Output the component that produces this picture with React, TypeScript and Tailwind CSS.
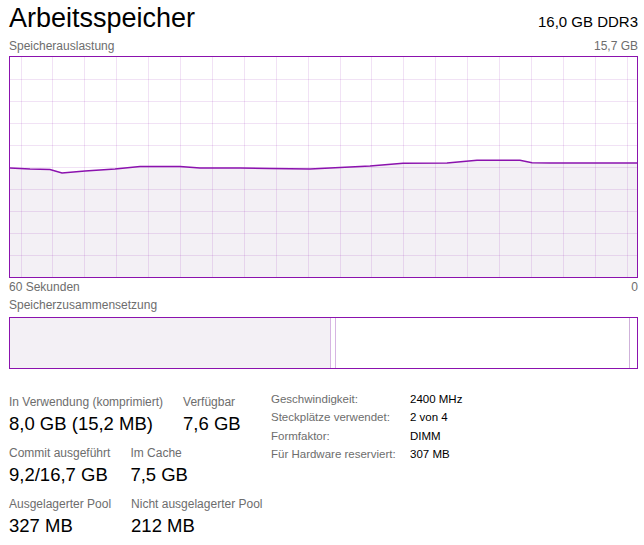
const points: [number, number][] = [
  [0, 111],
  [20, 112],
  [40, 112.5],
  [52, 116],
  [75, 114],
  [105, 112],
  [130, 109.5],
  [170, 109.5],
  [190, 111],
  [230, 111],
  [260, 111.5],
  [300, 112],
  [330, 110.5],
  [360, 109],
  [393, 106.3],
  [437, 106],
  [467, 103.3],
  [510, 103.3],
  [522, 105.7],
  [540, 106],
  [627, 106],
];

const W = 627;
const H = 220;

function UsageChart() {
  const line = points.map(([x, y]) => `${x},${y}`).join(" ");
  const area = `0,${H} ${line} ${W},${H}`;
  const vLines = Array.from({ length: 20 }, (_, k) => 10.5 + k * 31.9);
  const hLines = Array.from({ length: 9 }, (_, k) => 22.5 + k * 22);
  return (
    <div className="h-[222px] w-[629px] border border-[#8b12ae]">
      <svg width={W} height={H} className="block">
        <polygon points={area} fill="#f3f0f5" />
        {vLines.map((x) => (
          <line key={x} x1={Math.round(x) + 0.5} x2={Math.round(x) + 0.5} y1={0} y2={H} stroke="rgba(139,18,174,0.12)" strokeWidth={1} />
        ))}
        {hLines.map((y) => (
          <line key={y} x1={0} x2={W} y1={y} y2={y} stroke="rgba(139,18,174,0.12)" strokeWidth={1} />
        ))}
        <polyline points={line} fill="none" stroke="#8b12ae" strokeWidth={1.4} />
      </svg>
    </div>
  );
}

function CompositionBar() {
  return (
    <div className="flex h-[52px] w-[629px] border border-[#8b12ae]">
      <div className="w-[320px] bg-[#f3f0f5]" />
      <div className="w-[6px] border-x border-[#d6b5e2]" />
      <div className="w-[293px]" />
      <div className="w-[8px] border-l border-[#cfb2da]" />
    </div>
  );
}

function Stat({ label, value }: { label: string; value: string }) {
  return (
    <div>
      <div className="text-[12px] leading-[18px] text-[#6d6d6d]">{label}</div>
      <div className="text-[18.5px] leading-[26px] text-black">{value}</div>
    </div>
  );
}

const hardware = [
  ["Geschwindigkeit:", "2400 MHz"],
  ["Steckplätze verwendet:", "2 von 4"],
  ["Formfaktor:", "DIMM"],
  ["Für Hardware reserviert:", "307 MB"],
];

export default function App() {
  return (
    <div className="h-[545px] w-[644px] overflow-hidden bg-white pl-[9px] font-['Liberation_Sans',Arial,sans-serif]">
      <div className="flex w-[629px] items-baseline justify-between">
        <h1 className="text-[27px] leading-[37px] text-black">Arbeitsspeicher</h1>
        <span className="text-[15px] text-black">16,0 GB DDR3</span>
      </div>

      <div className="flex w-[629px] justify-between text-[12px] leading-[18px] text-[#6d6d6d]">
        <span>Speicherauslastung</span>
        <span>15,7 GB</span>
      </div>
      <div className="mt-[1px]">
        <UsageChart />
      </div>
      <div className="flex w-[629px] justify-between text-[12px] leading-[18px] text-[#6d6d6d]">
        <span>60 Sekunden</span>
        <span>0</span>
      </div>

      <div className="text-[12px] leading-[18px] text-[#6d6d6d]">Speicherzusammensetzung</div>
      <div className="mt-[3px]">
        <CompositionBar />
      </div>

      <div className="mt-[21px] flex items-start">
        <div className="flex w-[262px] flex-col gap-[7px] pt-[3px]">
          <div className="flex gap-5">
            <Stat label="In Verwendung (komprimiert)" value="8,0 GB (15,2 MB)" />
            <Stat label="Verfügbar" value="7,6 GB" />
          </div>
          <div className="flex gap-5">
            <Stat label="Commit ausgeführt" value="9,2/16,7 GB" />
            <Stat label="Im Cache" value="7,5 GB" />
          </div>
          <div className="flex gap-5">
            <Stat label="Ausgelagerter Pool" value="327 MB" />
            <Stat label="Nicht ausgelagerter Pool" value="212 MB" />
          </div>
        </div>
        <div className="grid auto-rows-[18.3px] grid-cols-[139px_auto] content-start text-[11.5px] leading-[18.3px]">
          {hardware.map(([k, v]) => (
            <div key={k} className="contents">
              <span className="text-[#6d6d6d]">{k}</span>
              <span className="text-black">{v}</span>
            </div>
          ))}
        </div>
      </div>
    </div>
  );
}
